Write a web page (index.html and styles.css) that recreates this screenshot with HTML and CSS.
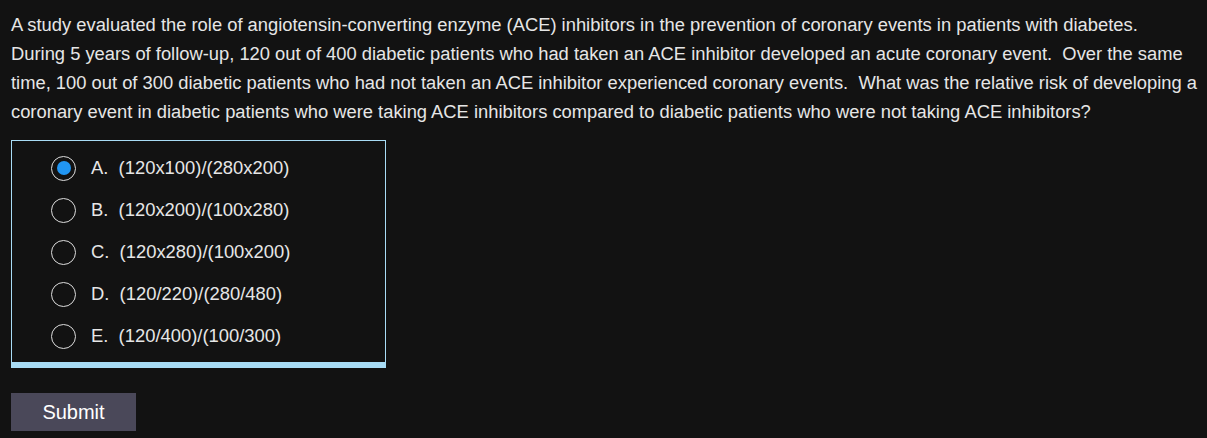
FILE: index.html
```html
<!DOCTYPE html>
<html>
<head>
<meta charset="utf-8">
<link rel="stylesheet" href="styles.css">
</head>
<body>
<div class="page">
  <p class="question">A study evaluated the role of angiotensin-converting enzyme (ACE) inhibitors in the prevention of coronary events in patients with diabetes.<br>During 5 years of follow-up, 120 out of 400 diabetic patients who had taken an ACE inhibitor developed an acute coronary event.&nbsp; Over the same time, 100 out of 300 diabetic patients who had not taken an ACE inhibitor experienced coronary events.&nbsp; What was the relative risk of developing a coronary event in diabetic patients who were taking ACE inhibitors compared to diabetic patients who were not taking ACE inhibitors?</p>
  <div class="choices">
    <label class="choice"><span class="radio checked"></span><span class="label">A.&nbsp; (120x100)/(280x200)</span></label>
    <label class="choice"><span class="radio"></span><span class="label">B.&nbsp; (120x200)/(100x280)</span></label>
    <label class="choice"><span class="radio"></span><span class="label">C.&nbsp; (120x280)/(100x200)</span></label>
    <label class="choice"><span class="radio"></span><span class="label">D.&nbsp; (120/220)/(280/480)</span></label>
    <label class="choice"><span class="radio"></span><span class="label">E.&nbsp; (120/400)/(100/300)</span></label>
  </div>
  <button class="submit">Submit</button>
</div>
</body>
</html>
```

FILE: styles.css
```css
html, body {
  margin: 0;
  padding: 0;
  background: #121212;
}
.page {
  padding: 10px 7px 10px 11px;
  font-family: "Liberation Sans", Arial, sans-serif;
  color: #e6e6e6;
}
.question {
  margin: 0;
  font-size: 18.35px;
  line-height: 29px;
}
.choices {
  margin-top: 14px;
  width: 373px;
  border: 1px solid #a8dcf5;
  border-bottom: 6px solid #a8dcf5;
  padding: 14px 0 13px 0;
  display: flex;
  flex-direction: column;
  gap: 16px;
}
.choice {
  display: flex;
  align-items: center;
  height: 26px;
  padding-left: 39px;
  gap: 15px;
  font-size: 18.4px;
}
.radio {
  box-sizing: border-box;
  width: 25px;
  height: 25px;
  border: 1.5px solid #dcdcdc;
  border-radius: 50%;
  display: flex;
  align-items: center;
  justify-content: center;
}
.radio.checked::after {
  content: "";
  width: 14px;
  height: 14px;
  border-radius: 50%;
  background: #2196f3;
}
.submit {
  margin-top: 25px;
  width: 125px;
  height: 38px;
  border: none;
  background: #4a4859;
  color: #ffffff;
  font-family: "Liberation Sans", Arial, sans-serif;
  font-size: 20px;
  display: block;
}
```
